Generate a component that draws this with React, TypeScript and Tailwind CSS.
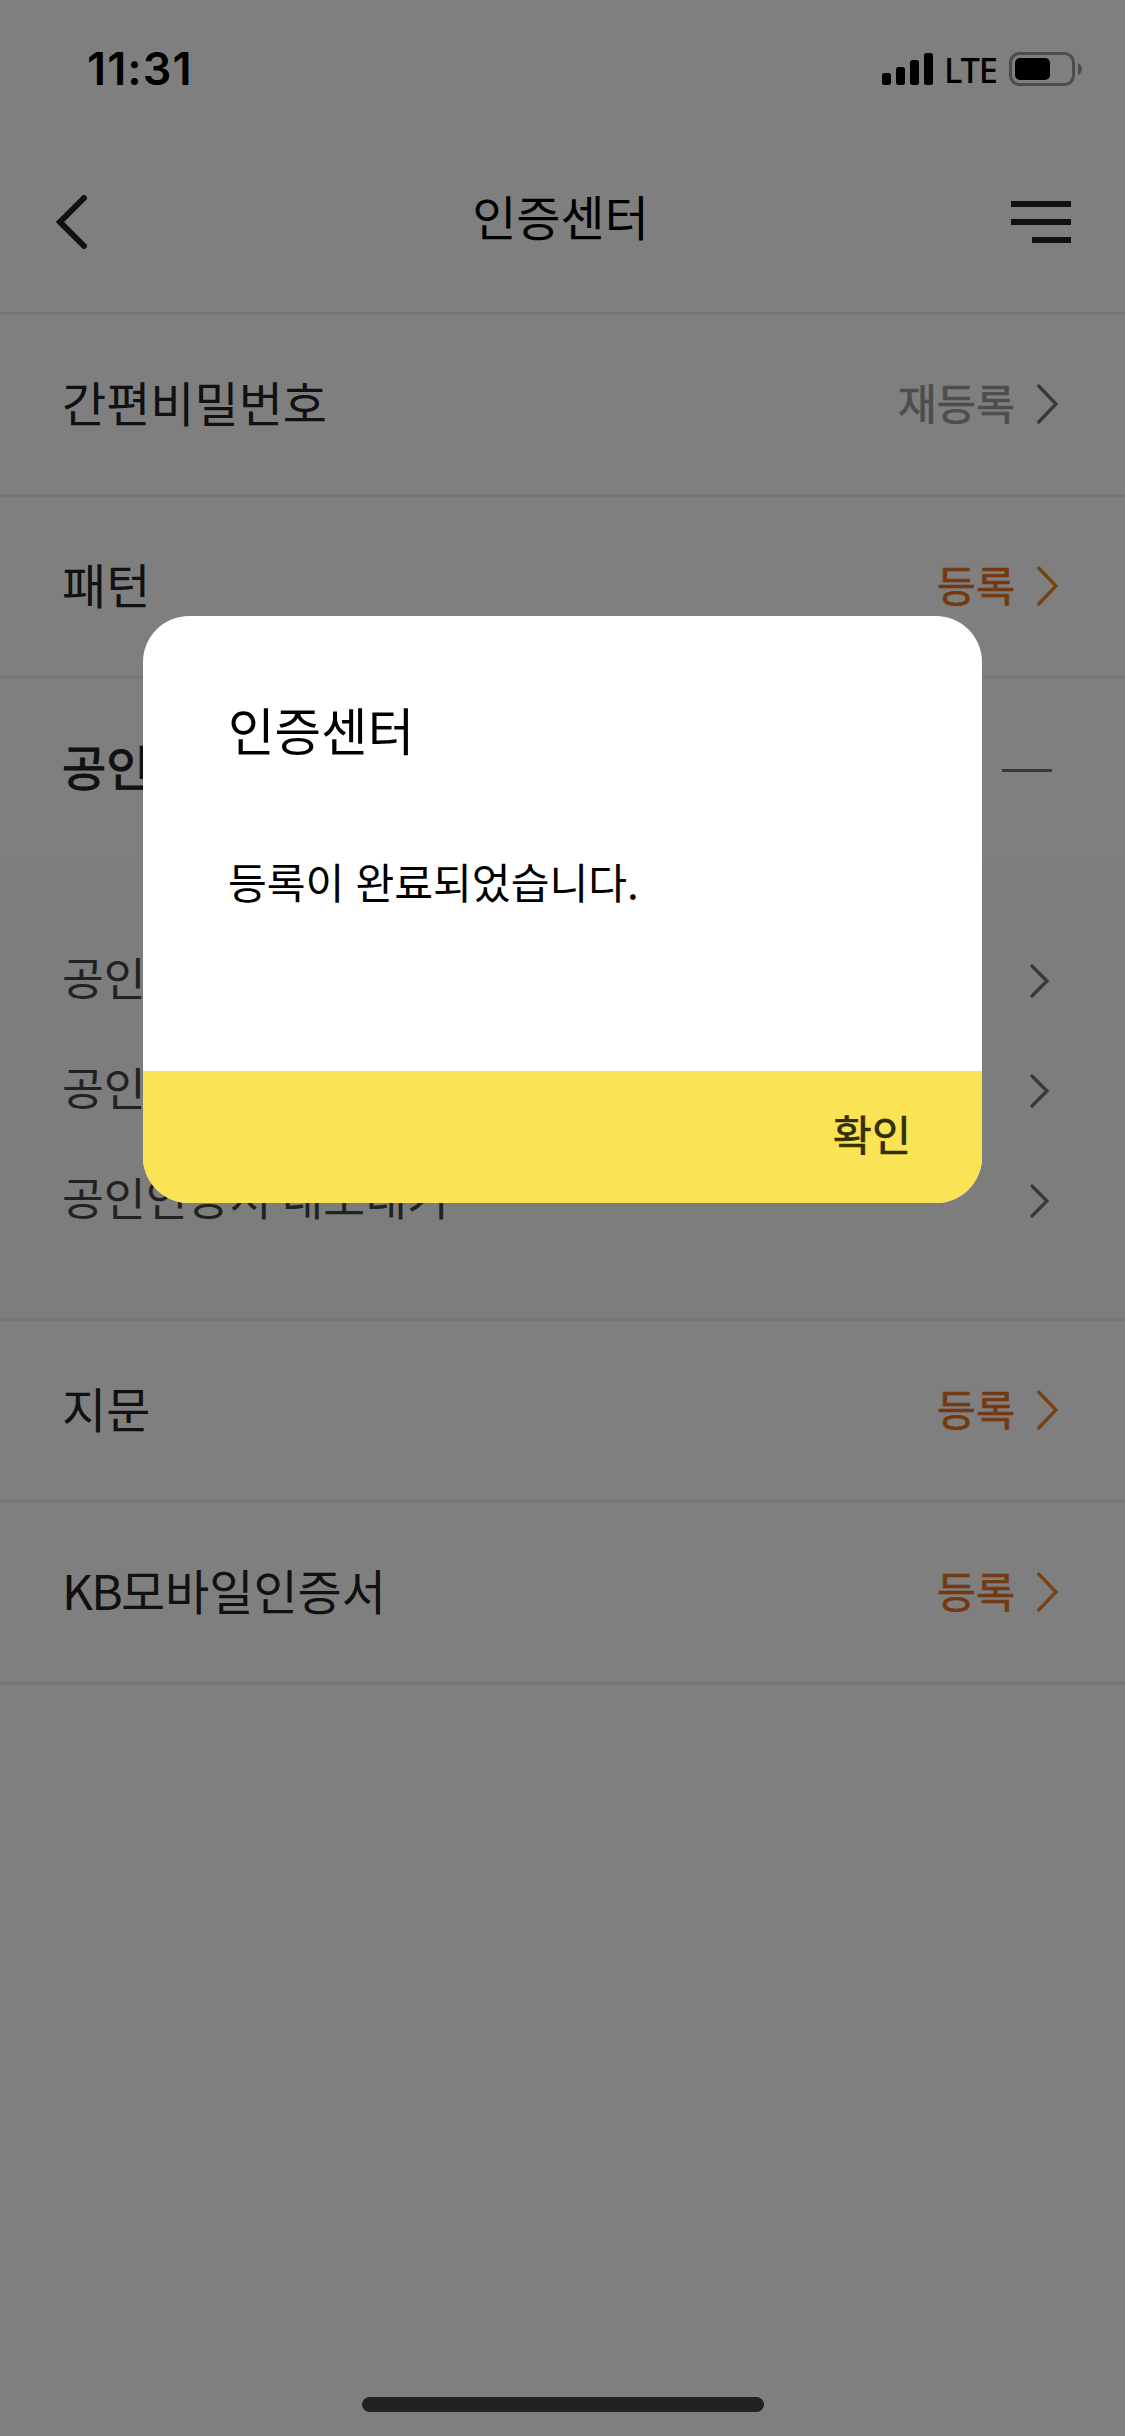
import type { ReactNode } from 'react'
import clsx from 'clsx'

interface MenuRowProps {
  label: ReactNode
  action: string
  muted?: boolean
}

const certItems = ['공인인증서 가져오기', '공인인증서 관리', '공인인증서 내보내기']

function StatusBar() {
  return (
    <div className="flex h-[132px] items-start justify-between pl-[87px] pr-[43px] text-black">
      <div className="mt-[42px] font-[Inter] text-[45px] font-semibold leading-[54px] tracking-[1.1px]">11:31</div>
      <div className="mt-[52px] flex items-start">
        <svg className="mt-px" width="51" height="32" viewBox="0 0 51 32">
          <rect x="0" y="20" width="9" height="12" rx="2.5" />
          <rect x="14" y="14" width="9" height="18" rx="2.5" />
          <rect x="28" y="7" width="9" height="25" rx="2.5" />
          <rect x="42" y="0" width="9" height="32" rx="2.5" />
        </svg>
        <div className="-mt-[2px] ml-[11px] w-[65px] whitespace-nowrap font-['Noto_Sans'] text-[34.5px] font-medium leading-[40px] tracking-[-1.2px]">
          LTE
        </div>
        <svg width="73" height="34" viewBox="0 0 73 34">
          <rect x="1.5" y="1.5" width="63" height="31" rx="9" fill="none" stroke="#999" strokeWidth="3" />
          <rect x="6" y="6" width="35" height="22" rx="5" />
          <path d="M69 11 Q73 13 73 17 Q73 21 69 23 Z" fill="#999" />
        </svg>
      </div>
    </div>
  )
}

function Header() {
  return (
    <header className="flex h-[183px] items-center justify-between border-b-3 border-[#ececec] pl-[56px] pr-[54px]">
      <svg width="60" height="54" viewBox="0 0 60 54" fill="none" stroke="#222" strokeWidth="6">
        <path d="M28 3 L4 27 L28 51" strokeLinecap="round" />
      </svg>
      <h1 className="-mt-[14px] mr-[6px] text-[48px] leading-[60px] text-black">인증센터</h1>
      <svg width="60" height="42" viewBox="0 0 60 42" fill="#222">
        <rect width="60" height="6" />
        <rect y="18" width="60" height="6" />
        <rect x="21" y="36" width="39" height="6" />
      </svg>
    </header>
  )
}

function MenuRow({ label, action, muted }: MenuRowProps) {
  return (
    <div className="flex h-[182px] items-center justify-between border-b-3 border-[#ececec] pl-[62px] pr-[66px]">
      <span className="-mt-[7px] text-[48px] leading-[60px] text-[#222]">{label}</span>
      <div className="flex items-center">
        <span
          className={clsx(
            '-mt-[6px] text-[42.5px] leading-[60px] [-webkit-text-stroke:0.7px]',
            muted ? 'text-[#9a9a9a]' : 'text-[#e67424]'
          )}
        >
          {action}
        </span>
        <svg
          className={clsx('-mt-[2px] ml-[22px]', muted ? 'text-[#707070]' : 'text-[#f08224]')}
          width="22"
          height="40"
          viewBox="0 0 22 40"
          fill="none"
          stroke="currentColor"
          strokeWidth="3.3"
        >
          <path d="M1.7 2 L19 20 L1.7 38" strokeLinecap="round" />
        </svg>
      </div>
    </div>
  )
}

function CertSection() {
  return (
    <section className="-mt-px">
      <div className="flex h-[184px] items-center justify-between pl-[62px] pr-[73px]">
        <span className="-mt-[11px] text-[48px] leading-[60px] text-[#222] [-webkit-text-stroke:1.1px]">공인인증서</span>
        <div className="h-[3px] w-[50px] bg-[#707070]" />
      </div>
      <div className="h-[459px] border-b-3 border-[#ececec] bg-[#fafafa] pl-[62px] pr-[76px] pt-[64px]">
        {certItems.map((item) => (
          <div key={item} className="flex h-[110px] items-center justify-between">
            <span className="-mt-[10px] text-[45.5px] leading-[60px] text-[#444]">{item}</span>
            <svg width="18" height="34" viewBox="0 0 18 34" fill="none" stroke="#707070" strokeWidth="3.2" overflow="visible">
              <path d="M1 2 L16 17 L1 32" strokeLinecap="round" />
            </svg>
          </div>
        ))}
      </div>
    </section>
  )
}

function AlertDialog() {
  return (
    <div className="absolute left-[143px] top-[616px] flex h-[587px] w-[839px] flex-col overflow-hidden rounded-[46px] bg-white text-black">
      <div className="flex-1 px-[85px] pt-[81px]">
        <h2 className="text-[50.6px] leading-[64px]">인증센터</h2>
        <p className="mt-[90px] text-[42.2px] leading-[60px] [word-spacing:1.5px]">등록이 완료되었습니다.</p>
      </div>
      <button className="flex h-[132px] items-center justify-end bg-[#fae456] pb-[8px] pr-[71px] text-[42.5px] leading-[60px] text-[#332e00] [-webkit-text-stroke:0.7px]">
        확인
      </button>
    </div>
  )
}

export default function App() {
  return (
    <div className="relative h-[2436px] w-[1125px] overflow-hidden bg-white font-['Noto_Sans_CJK_KR',sans-serif]">
      <StatusBar />
      <Header />
      <MenuRow label="간편비밀번호" action="재등록" muted />
      <MenuRow label="패턴" action="등록" />
      <CertSection />
      <MenuRow label="지문" action="등록" />
      <MenuRow
        label={
          <>
            <span className="tracking-[-1.8px]">KB</span>모바일인증서
          </>
        }
        action="등록"
      />

      {/* Dimmed backdrop */}
      <div className="absolute inset-0 bg-black/50" />
      <AlertDialog />
      {/* Home indicator */}
      <div className="absolute bottom-[24px] left-[362px] h-[15px] w-[402px] rounded-full bg-[#222]" />
    </div>
  )
}
